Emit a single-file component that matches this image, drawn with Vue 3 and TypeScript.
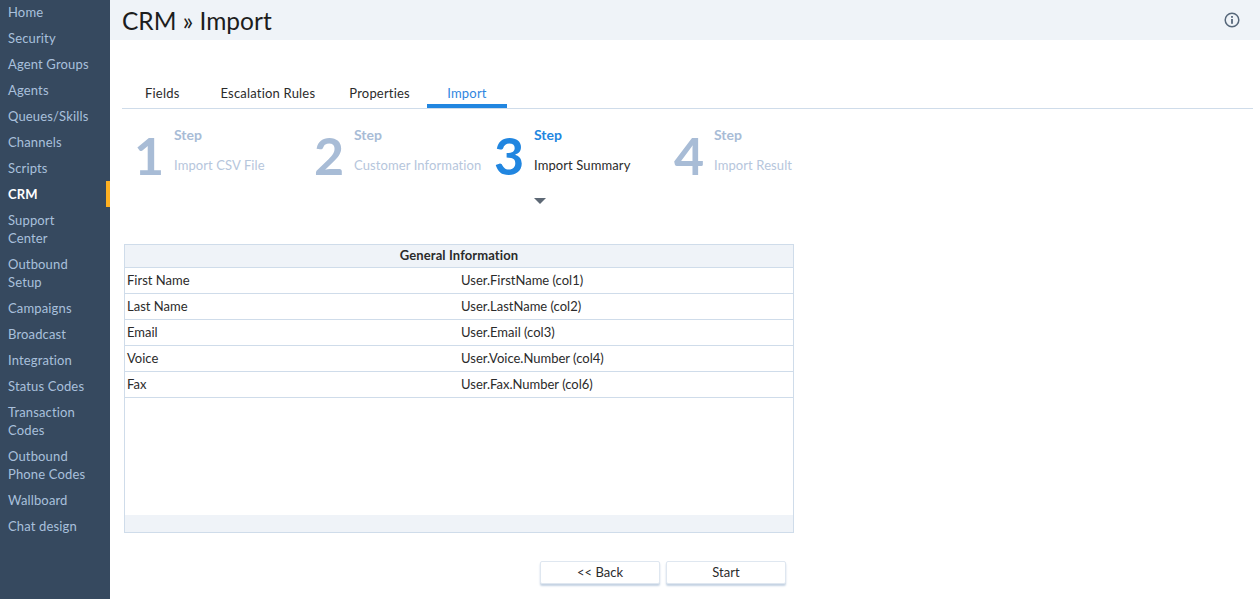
<script setup lang="ts">
interface NavItem {
  label: string;
  active?: boolean;
}

const navItems: NavItem[] = [
  { label: 'Home' },
  { label: 'Security' },
  { label: 'Agent Groups' },
  { label: 'Agents' },
  { label: 'Queues/Skills' },
  { label: 'Channels' },
  { label: 'Scripts' },
  { label: 'CRM', active: true },
  { label: 'Support Center' },
  { label: 'Outbound Setup' },
  { label: 'Campaigns' },
  { label: 'Broadcast' },
  { label: 'Integration' },
  { label: 'Status Codes' },
  { label: 'Transaction Codes' },
  { label: 'Outbound Phone Codes' },
  { label: 'Wallboard' },
  { label: 'Chat design' },
];

const tabs = ['Fields', 'Escalation Rules', 'Properties', 'Import'];

const steps = [
  { num: 1, label: 'Import CSV File' },
  { num: 2, label: 'Customer Information' },
  { num: 3, label: 'Import Summary', active: true },
  { num: 4, label: 'Import Result' },
];

const rows = [
  ['First Name', 'User.FirstName (col1)'],
  ['Last Name', 'User.LastName (col2)'],
  ['Email', 'User.Email (col3)'],
  ['Voice', 'User.Voice.Number (col4)'],
  ['Fax', 'User.Fax.Number (col6)'],
];
</script>

<template>
  <div class="page">
    <nav class="sidebar">
      <a
        v-for="item in navItems"
        :key="item.label"
        class="nav-item"
        :class="{ active: item.active }"
      >{{ item.label }}</a>
    </nav>

    <main class="main">
      <header class="topbar">
        <h1>CRM » Import</h1>
        <svg class="info" width="16" height="16" viewBox="0 0 16 16" fill="none">
          <circle cx="8" cy="8" r="6.8" stroke="#56677a" stroke-width="1.5" />
          <rect x="7.1" y="7" width="1.8" height="4.8" fill="#56677a" />
          <rect x="7.1" y="4" width="1.8" height="1.8" fill="#56677a" />
        </svg>
      </header>

      <div class="content">
        <div class="tabs">
          <div
            v-for="tab in tabs"
            :key="tab"
            class="tab"
            :class="{ current: tab === 'Import' }"
          >{{ tab }}</div>
        </div>

        <div class="steps">
          <div
            v-for="step in steps"
            :key="step.num"
            class="step"
            :class="{ active: step.active }"
          >
            <div class="step-num">{{ step.num }}</div>
            <div class="step-text">
              <div class="step-title">Step</div>
              <div class="step-label">{{ step.label }}</div>
              <div v-if="step.active" class="caret"></div>
            </div>
          </div>
        </div>

        <div class="panel">
          <div class="panel-head">General Information</div>
          <div class="panel-body">
            <div v-for="row in rows" :key="row[0]" class="row">
              <div class="cell-name">{{ row[0] }}</div>
              <div>{{ row[1] }}</div>
            </div>
          </div>
          <div class="panel-foot"></div>
        </div>

        <div class="actions">
          <button class="btn">&lt;&lt; Back</button>
          <button class="btn">Start</button>
        </div>
      </div>
    </main>
  </div>
</template>

<style>
html,
body {
  margin: 0;
  overflow: hidden;
  background: #fff;
}
</style>

<style scoped>
.page {
  display: flex;
  width: 1260px;
  height: 599px;
  overflow: hidden;
  font-family: Lato, "Open Sans", sans-serif;
  font-size: 13px;
  color: #2b2b2b;
}

.sidebar {
  box-sizing: border-box;
  flex: 0 0 110px;
  min-width: 0;
  height: 600px;
  margin-top: -1px;
  background: #36495f;
}

.nav-item {
  display: block;
  box-sizing: border-box;
  padding: 4px 18px 4px 8px;
  line-height: 18px;
  letter-spacing: 0.15px;
  color: #a9c0dc;
}

.nav-item.active {
  padding-right: 14px;
  color: #fff;
  font-weight: 700;
  border-right: 4px solid #fdb022;
}

.main {
  flex: 1;
  min-width: 0;
}

.topbar {
  display: flex;
  align-items: center;
  justify-content: space-between;
  height: 40px;
  padding: 0 20px 0 12px;
  background: #eff3f8;
}

.topbar h1 {
  margin: 0;
  font-size: 24.5px;
  font-weight: 400;
  color: #1d1d1d;
}

.content {
  padding: 40px 7px 0 12px;
}

.tabs {
  display: flex;
  height: 28px;
  letter-spacing: 0.2px;
  border-bottom: 1px solid #cfdcea;
}

.tab {
  box-sizing: border-box;
  height: 28px;
  padding: 4px 17px 0;
  line-height: 18px;
  text-align: center;
}

.tab:first-child {
  padding: 4px 24px 0 23px;
}

.tab.current {
  width: 80px;
  color: #2f86e0;
  border-bottom: 4px solid #2186e0;
}

.steps {
  display: flex;
  height: 135px;
  padding-left: 12px;
}

.step {
  display: flex;
  flex: 0 0 180px;
  color: #a8bcd6;
}

.step-num {
  width: 40px;
  padding-top: 16px;
  font-size: 52px;
  font-weight: 700;
  line-height: 60px;
}

.step-text {
  padding-top: 16px;
}

.step-title {
  font-size: 14px;
  font-weight: 700;
  line-height: 20px;
}

.step-label {
  margin-top: 10px;
  line-height: 20px;
  letter-spacing: 0.1px;
  color: #b6c6dc;
  white-space: nowrap;
}

.step.active {
  color: #2186e0;
}

.step.active .step-label {
  color: #2b2b2b;
}

.caret {
  width: 0;
  margin-top: 23px;
  border-top: 6px solid #5d6875;
  border-left: 6px solid transparent;
  border-right: 6px solid transparent;
}

.panel {
  box-sizing: border-box;
  display: flex;
  flex-direction: column;
  width: 670px;
  height: 289px;
  margin-left: 2px;
  border: 1px solid #cfdcea;
}

.panel-head {
  height: 22px;
  line-height: 21px;
  font-weight: 700;
  letter-spacing: 0.1px;
  text-align: center;
  background: #eff3f8;
  border-bottom: 1px solid #cfdcea;
}

.panel-body {
  flex: 1;
}

.row {
  box-sizing: border-box;
  display: flex;
  height: 26px;
  padding-left: 2px;
  line-height: 25px;
  border-bottom: 1px solid #cfdcea;
}

.cell-name {
  width: 334px;
}

.panel-foot {
  height: 17px;
  background: #eff3f8;
}

.actions {
  display: flex;
  gap: 6px;
  padding: 28px 0 0 418px;
}

.btn {
  width: 120px;
  height: 23px;
  padding: 0;
  font: inherit;
  line-height: 21px;
  color: #2b2b2b;
  background: #fff;
  border: 1px solid #dfe7f0;
  border-radius: 2px;
  box-shadow: 0 2px 2px #c4d2e3;
}
</style>
